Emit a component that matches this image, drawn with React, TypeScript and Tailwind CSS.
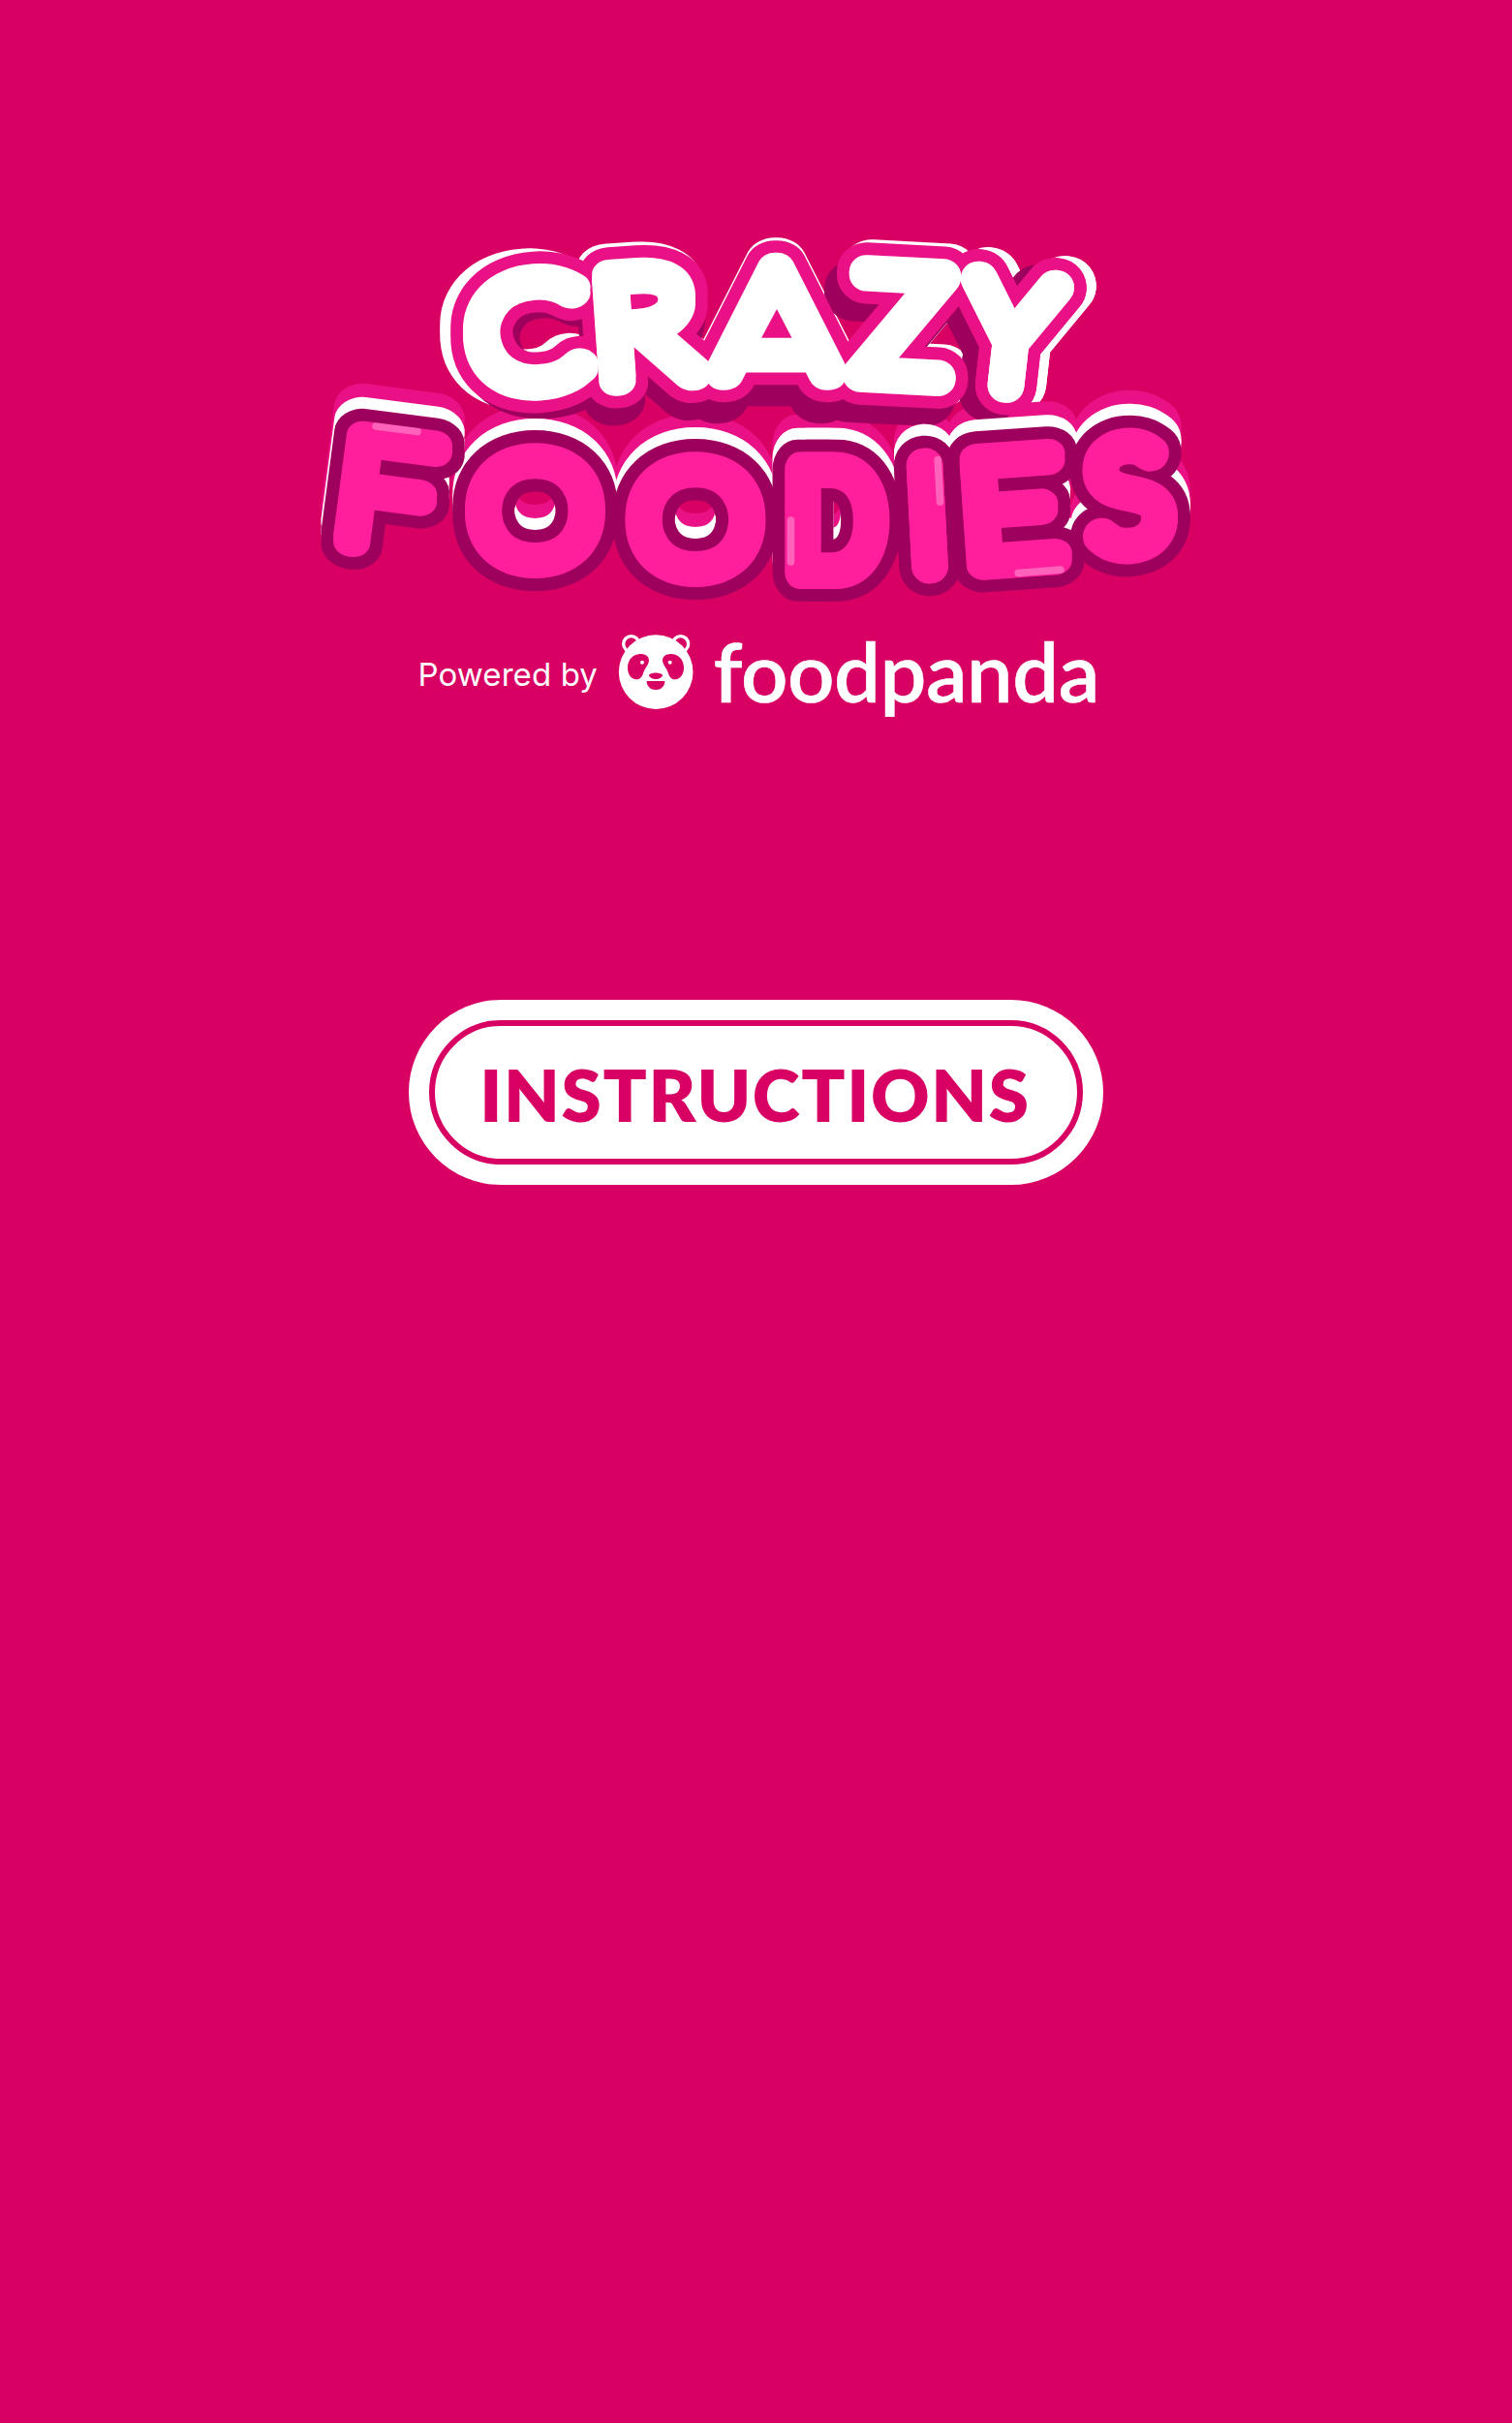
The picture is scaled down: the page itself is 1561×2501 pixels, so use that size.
import React from "react";

type Offset = [number, number];

type Letter = {
  id: string;
  char: string;
  // centre, size and tilt of the letter's centre line
  x: number;
  y: number;
  w: number;
  h: number;
  tilt: number;
  // ink box of the hairline glyph at 100px: left, right, ascent, descent
  ink: [number, number, number, number];
  light?: Offset;
  shade?: Offset;
};

const CRAZY: Letter[] = [
  { id: "c1", char: "C", x: 546, y: 343.5, w: 104, h: 106, tilt: -4, ink: [6, 65, 71, 1], light: [-11, -3], shade: [7, 6] },
  { id: "c2", char: "R", x: 672, y: 335.5, w: 82, h: 105, tilt: -4, ink: [11, 57, 70, 0], light: [-3.5, -3.5], shade: [-3, 18] },
  { id: "c3", char: "A", x: 801, y: 332, w: 110, h: 105, tilt: 0, ink: [2, 62, 70, 0], light: [0, -3], shade: [-7, 22] },
  { id: "c4", char: "Z", x: 930.5, y: 336, w: 81, h: 106, tilt: 3, ink: [4, 55, 70, 0], light: [5, -3], shade: [-13, 18] },
  { id: "c5", char: "Y", x: 1044, y: 345, w: 84, h: 106, tilt: 6.5, ink: [1, 56, 70, 0], light: [10, -2], shade: [-17, 7] },
];

const FOODIES: Letter[] = [
  { id: "f1", char: "F", x: 405, y: 509.5, w: 76, h: 105, tilt: 7.5, ink: [11, 53, 70, 0] },
  { id: "f2", char: "O", x: 551.5, y: 527.5, w: 111, h: 106, tilt: 0, ink: [6, 72, 71, 1] },
  { id: "f3", char: "O", x: 717, y: 536.7, w: 111, h: 106, tilt: 0, ink: [6, 72, 71, 1] },
  { id: "f4", char: "D", x: 863.5, y: 537.3, w: 73, h: 105, tilt: 0, ink: [11, 69, 70, 0] },
  { id: "f5", char: "I", x: 956.5, y: 532.5, w: 3, h: 104, tilt: -3, ink: [11, 13, 70, 0] },
  { id: "f6", char: "E", x: 1048, y: 525.7, w: 75, h: 105, tilt: -4, ink: [11, 53, 70, 0] },
  { id: "f7", char: "S", x: 1164, y: 512, w: 65, h: 105, tilt: -5, ink: [5, 47, 71, 1] },
];

const scaleOf = ({ w, h, ink: [l, r, a, d] }: Letter): Offset => [w / (r - l), h / (a + d)];

const place = (letter: Letter) => {
  const { x, y, tilt, ink: [l, r, a, d] } = letter;
  const [sx, sy] = scaleOf(letter);
  return `translate(${x} ${y}) rotate(${tilt}) scale(${sx} ${sy}) translate(${-(l + r) / 2} ${(a - d) / 2})`;
};

function Layer({ letters, color, width, shift }: { letters: Letter[]; color: string; width: number; shift?: (l: Letter) => Offset }) {
  return (
    <g fill={color} stroke={color} strokeLinejoin="round" strokeLinecap="round">
      {letters.map((l) => {
        const [dx, dy] = shift ? shift(l) : [0, 0];
        const [sx, sy] = scaleOf(l);
        const max = Math.max(sx, sy);
        // the pair of copies evens out the stroke on stretched letters
        const gx = (width * (1 - sx / max)) / 2;
        const gy = (width * (1 - sy / max)) / 2;
        return (
          <g key={l.id} strokeWidth={width / max}>
            <use href={`#${l.id}`} x={dx - gx} y={dy - gy} />
            <use href={`#${l.id}`} x={dx + gx} y={dy + gy} />
          </g>
        );
      })}
    </g>
  );
}

function Logo() {
  return (
    <svg className="block h-[400px] w-[920px]" viewBox="320.5 230 920 400" role="img" aria-label="Crazy Foodies">
      <defs>
        {[...CRAZY, ...FOODIES].map((l) => (
          <g key={l.id} id={l.id}>
            <g transform={place(l)}>
              <text className="font-['Lato',sans-serif] text-[100px] font-thin">{l.char}</text>
              {l.char === "A" && <path d="M14.5 -12H49.5" />}
            </g>
          </g>
        ))}
      </defs>

      <Layer letters={CRAZY} color="#ffffff" width={61.5} shift={(l) => l.light!} />
      <Layer letters={FOODIES} color="#ea1186" width={61.5} shift={() => [0, -26]} />
      <Layer letters={CRAZY} color="#9e005d" width={61.5} shift={(l) => l.shade!} />
      <Layer letters={CRAZY} color="#ea1186" width={61.5} />
      <Layer letters={CRAZY} color="#ffffff" width={36} />
      <path d="M801.5 319L817 348.7H785.6Z" fill="#ea1186" />

      <Layer letters={FOODIES} color="#ffffff" width={61.5} shift={() => [0, -12]} />
      <Layer letters={FOODIES} color="#9e005d" width={61.5} />
      <Layer letters={FOODIES} color="#ff1f9c" width={36} />
      <g stroke="#ffffff" strokeOpacity="0.3" strokeWidth="7.6" strokeLinecap="round">
        <path d="M387.5 440L430.5 445.5M816 537V580M967.7 474.5L970 518M1050.7 591.5L1094.5 588" />
      </g>
    </svg>
  );
}

function Panda() {
  const patch =
    "M122 105C140 105 150 117 146 131C143 142 134 150 130 162C126 177 119 184 108 184C92 184 81 168 81 148C81 122 98 105 122 105Z";
  return (
    <svg className="block h-[100px] w-[110px] shrink-0" viewBox="0 0 330 300" aria-hidden="true">
      <g fill="none" stroke="#fff" strokeWidth="10">
        <circle cx="92" cy="74" r="24" />
        <circle cx="245" cy="74" r="24" />
      </g>
      <circle cx="168.5" cy="161" r="115" fill="#fff" />
      <g fill="#d80063">
        <path d={patch} />
        <path d={patch} transform="translate(336 0) scale(-1 1)" />
        <path d="M147 172C149 161 187 161 189 172C187 179 178 183 168 183C158 183 149 179 147 172Z" />
        <path d="M140 189H196C196 206 184 216 168 216C152 216 140 206 140 189Z" />
      </g>
      <circle cx="126" cy="131" r="6" fill="#fff" />
      <circle cx="212" cy="131" r="6" fill="#fff" />
    </svg>
  );
}

export default function App() {
  return (
    <main className="flex min-h-[2501px] w-full flex-col items-center bg-[#d80063] pt-[230px] text-white">
      <Logo />
      <div className="mt-2.5 flex h-[104px] w-[702px] items-start pl-[2px]">
        <span className="mt-9 w-[189px] shrink-0 whitespace-nowrap font-['Inter',sans-serif] text-[33px] font-normal leading-10 tracking-[0.1px]">
          Powered by
        </span>
        <Panda />
        <span className="ml-[6px] mt-px whitespace-nowrap font-['Lato',sans-serif] text-[85px] font-semibold leading-[102px] tracking-[-0.5px] [-webkit-text-stroke:0.5px_#fff]">
          foodpanda
        </span>
      </div>
      <button className="mt-[288px] h-[191px] w-[717px] rounded-full bg-white p-[21px] text-[#d80063]">
        <span className="flex h-full w-full items-center justify-center rounded-full border-[6px] border-[#d80063] pr-[2px] pt-[4px] font-['Lato',sans-serif] text-[74.5px] font-extrabold leading-none tracking-[1.6px]">
          INSTRUCTIONS
        </span>
      </button>
    </main>
  );
}
